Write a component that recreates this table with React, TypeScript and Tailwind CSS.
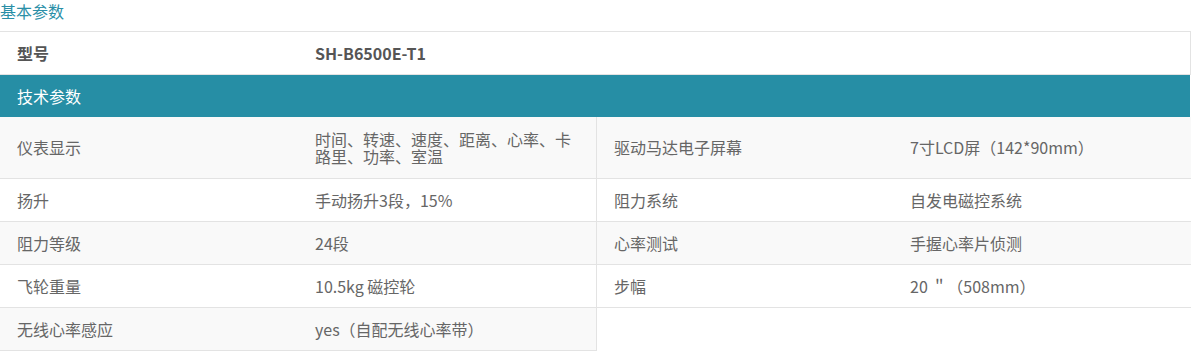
const FONT = "font-['Microsoft_YaHei','Noto_Sans_CJK_SC','Noto_Sans',sans-serif]";

type Pair = { label: string; value: string };

const ROWS: { left: Pair; right?: Pair; tall?: boolean }[] = [
  {
    left: { label: "仪表显示", value: "时间、转速、速度、距离、心率、卡路里、功率、室温" },
    right: { label: "驱动马达电子屏幕", value: "7寸LCD屏（142*90mm）" },
    tall: true,
  },
  {
    left: { label: "扬升", value: "手动扬升3段，15%" },
    right: { label: "阻力系统", value: "自发电磁控系统" },
  },
  {
    left: { label: "阻力等级", value: "24段" },
    right: { label: "心率测试", value: "手握心率片侦测" },
  },
  {
    left: { label: "飞轮重量", value: "10.5kg 磁控轮" },
    right: { label: "步幅", value: "20 ＂（508mm）" },
  },
  {
    left: { label: "无线心率感应", value: "yes（自配无线心率带）" },
  },
];

function Cell({ pair, labelW }: { pair: Pair; labelW: string }) {
  return (
    <div className="flex h-full items-center">
      <div className={`${labelW} shrink-0 pl-[17px] pr-[17px]`}>{pair.label}</div>
      <div className="flex-1 pl-[17px] pr-[17px]">{pair.value}</div>
    </div>
  );
}

export default function App() {
  return (
    <div className={`${FONT} w-[1191px] bg-white text-[16px] text-[#666]`}>
      {/* 基本参数 */}
      <div className="h-[31px] leading-[22px] text-[#2a8fa7]">基本参数</div>

      <div className="flex h-[44px] items-center border-y border-r border-[#e3e3e3] w-[1191px] font-bold text-[#555]">
        <div className="w-[298px] pl-[17px]">型号</div>
        <div className="pl-[17px]">SH-B6500E-T1</div>
      </div>

      {/* 技术参数 */}
      <div className="flex h-[42px] w-[1190px] items-center bg-[#268ea5] pl-[17px] text-white">
        技术参数
      </div>

      {ROWS.map((row, i) => {
        const gray = i % 2 === 0;
        const h = row.tall ? "h-[61px]" : "h-[42px]";
        return (
          <div key={i} className="flex leading-[17px]">
            <div
              className={`${h} box-content w-[596px] border-r border-b border-[#e3e3e3] ${
                gray ? "bg-[#f9f9f9]" : "bg-white"
              }`}
            >
              <Cell pair={row.left} labelW="w-[298px]" />
            </div>
            {row.right ? (
              <div
                className={`${h} box-content flex-1 border-b border-[#e3e3e3] ${
                  gray ? "bg-[#f9f9f9]" : "bg-white"
                }`}
              >
                <Cell pair={row.right} labelW="w-[296px]" />
              </div>
            ) : (
              <div className="flex-1" />
            )}
          </div>
        );
      })}
    </div>
  );
}
